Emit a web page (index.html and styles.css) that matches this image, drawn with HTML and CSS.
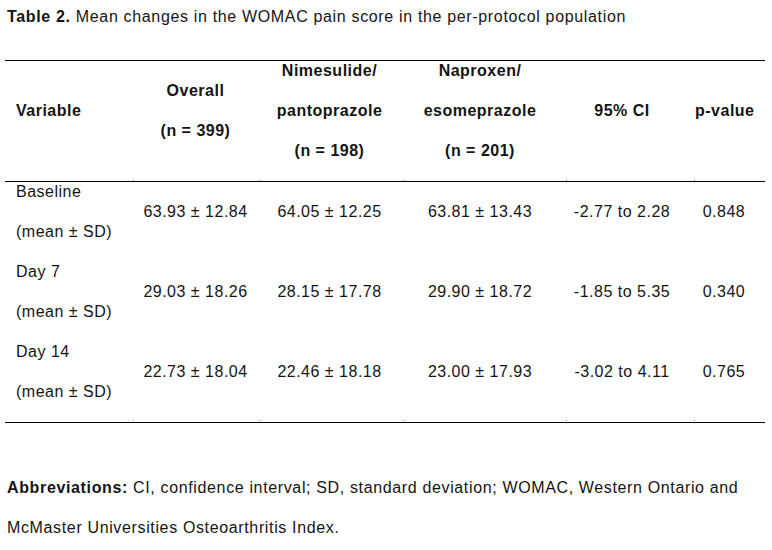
FILE: index.html
```html
<!DOCTYPE html>
<html lang="en">
<head>
<meta charset="utf-8">
<title>Table 2</title>
<link rel="stylesheet" href="styles.css">
</head>
<body>
<p class="caption"><b>Table 2.</b> Mean changes in the WOMAC pain score in the per-protocol population</p>
<table class="data">
  <colgroup>
    <col class="c1"><col class="c2"><col class="c3"><col class="c4"><col class="c5"><col class="c6">
  </colgroup>
  <thead>
    <tr>
      <th class="k1"><p>Variable</p></th>
      <th class="k2"><p>Overall</p><p>(n = 399)</p></th>
      <th class="k3"><p>Nimesulide/</p><p>pantoprazole</p><p>(n = 198)</p></th>
      <th class="k4"><p>Naproxen/</p><p>esomeprazole</p><p>(n = 201)</p></th>
      <th class="k5"><p>95% CI</p></th>
      <th class="k6"><p>p-value</p></th>
    </tr>
  </thead>
  <tbody>
    <tr>
      <td class="k1"><p>Baseline</p><p>(mean ± SD)</p></td>
      <td class="k2"><p>63.93 ± 12.84</p></td>
      <td class="k3"><p>64.05 ± 12.25</p></td>
      <td class="k4"><p>63.81 ± 13.43</p></td>
      <td class="k5"><p>-2.77 to 2.28</p></td>
      <td class="k6"><p>0.848</p></td>
    </tr>
    <tr>
      <td class="k1"><p>Day 7</p><p>(mean ± SD)</p></td>
      <td class="k2"><p>29.03 ± 18.26</p></td>
      <td class="k3"><p>28.15 ± 17.78</p></td>
      <td class="k4"><p>29.90 ± 18.72</p></td>
      <td class="k5"><p>-1.85 to 5.35</p></td>
      <td class="k6"><p>0.340</p></td>
    </tr>
    <tr>
      <td class="k1"><p>Day 14</p><p>(mean ± SD)</p></td>
      <td class="k2"><p>22.73 ± 18.04</p></td>
      <td class="k3"><p>22.46 ± 18.18</p></td>
      <td class="k4"><p>23.00 ± 17.93</p></td>
      <td class="k5"><p>-3.02 to 4.11</p></td>
      <td class="k6"><p>0.765</p></td>
    </tr>
  </tbody>
</table>
<p class="notes"><b>Abbreviations:</b> CI, confidence interval; SD, standard deviation; WOMAC, Western Ontario and McMaster Universities Osteoarthritis Index.</p>
</body>
</html>
```

FILE: styles.css
```css
html, body {
  margin: 0;
  padding: 0;
  background: #fff;
}
body {
  font-family: "Liberation Sans", Arial, sans-serif;
  font-size: 16px;
  color: #141414;
  letter-spacing: 0.5px;
}
.caption {
  margin: 7px 0 33px 7px;
  line-height: 20px;
  letter-spacing: 0.66px;
}
.data {
  margin-left: 5px;
  width: 760px;
  table-layout: fixed;
  border-collapse: collapse;
  border-top: 1px solid #000;
  border-bottom: 1px solid #000;
}
.data thead tr {
  border-bottom: 1px solid #000;
}
.c1 { width: 129px; }
.c2 { width: 127px; }
.c3 { width: 144px; }
.c4 { width: 162px; }
.c5 { width: 128px; }
.c6 { width: 70px; }
.data th,
.data td {
  position: relative;
  padding: 0;
  vertical-align: middle;
  text-align: center;
  white-space: nowrap;
}
.data th { font-weight: bold; }
.data p {
  margin: 0 0 20px;
  line-height: 20px;
}
.data .k1 { text-align: left; padding-left: 11px; }
.data .k2 { padding-right: 4px; }
.data .k3 { padding-right: 7px; }
.data .k4 { padding-right: 12px; }
.data .k5 { padding-right: 18px; }
.data .k6 { padding-right: 12px; }

/* faint column-boundary ticks just above the rules */
.data thead th + th::after,
.data tbody tr:last-child td + td::after {
  content: "";
  position: absolute;
  left: -1px;
  bottom: 0;
  width: 1px;
  height: 1px;
  background: #8a8a8a;
}
.data tbody tr:last-child td + td::after {
  bottom: 1px;
}

.notes {
  margin: 45px 0 0 7px;
  max-width: 750px;
  line-height: 40px;
  letter-spacing: 0.64px;
}
```
